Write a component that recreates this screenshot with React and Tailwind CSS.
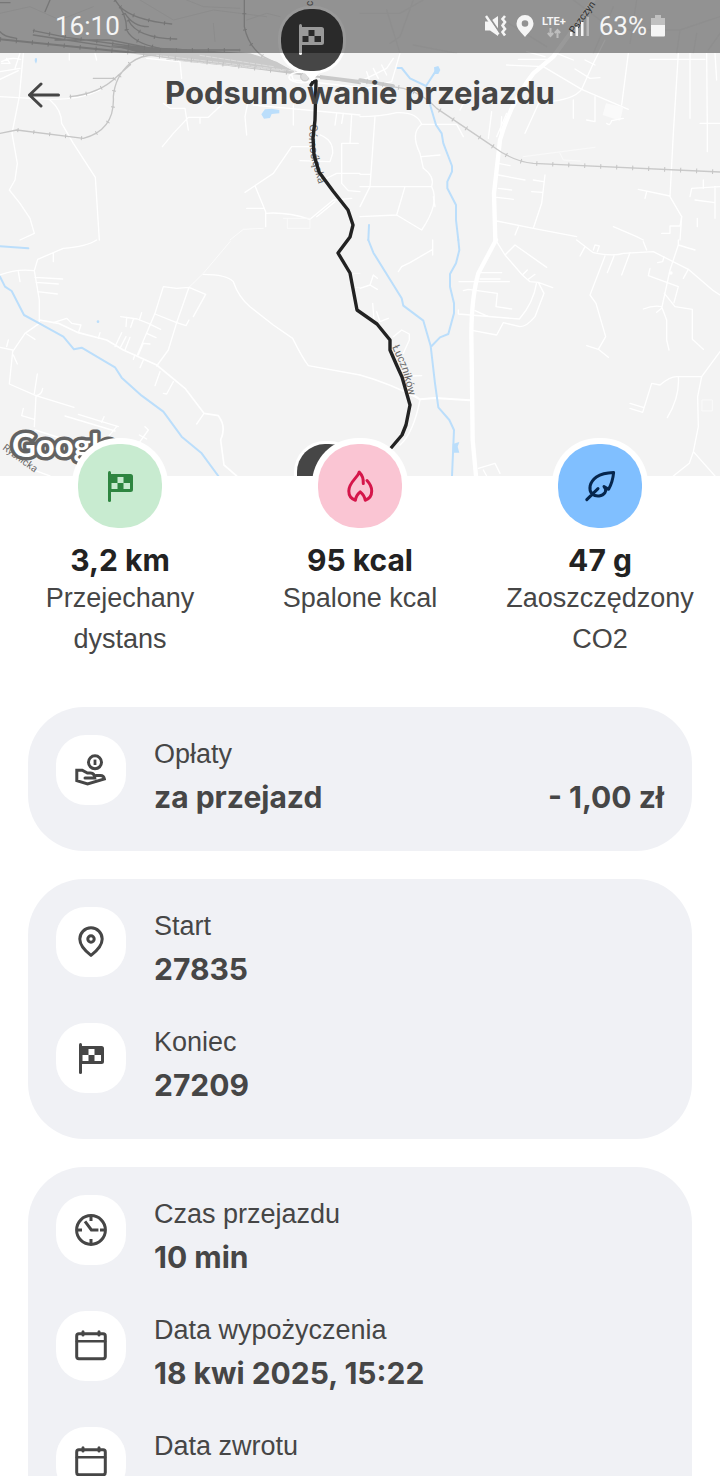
import React from "react";

function FlagIcon({ className }) {
  return (
    <svg viewBox="0 0 36 36" className={className} fill="currentColor" aria-hidden="true">
      <path d="M7.5 4.5V32.5" stroke="currentColor" strokeWidth="3" strokeLinecap="round" />
      <path
        fillRule="evenodd"
        d="M7 6H28.5a2.5 2.5 0 0 1 2.5 2.5V21.5a2.5 2.5 0 0 1-2.5 2.5H7ZM15.5 9v6h6V9ZM9.5 15v6h6v-6ZM21.5 15v6H28v-6Z"
      />
    </svg>
  );
}

function LineIcon({ className, children }) {
  return (
    <svg
      viewBox="0 0 36 36"
      className={className}
      fill="none"
      stroke="currentColor"
      strokeWidth="3"
      strokeLinecap="round"
      strokeLinejoin="round"
      aria-hidden="true"
    >
      {children}
    </svg>
  );
}

function FlameIcon({ className }) {
  return (
    <LineIcon className={className}>
      <path d="M21.3 15.6C21.6 10.5 19.6 6.4 17.2 4C16 9.6 6.8 14 6.8 23C6.8 27.5 9 30.8 13.4 32.2C13.8 28.6 15.6 26 18.2 23.8C20.8 26 22.8 28.6 23.2 32.2C27.5 30.8 29.7 27.5 29.7 23C29.7 18.6 27.6 15.4 25 12.6" />
    </LineIcon>
  );
}

function LeafIcon({ className }) {
  return (
    <LineIcon className={className}>
      <path d="M4.8 31.6L16 20.6M10 26C6.4 21.6 7.2 14.4 14.4 9C19 6 25 4.8 31.6 4.6C31 11 29.6 16 26.6 21.2L22 18.6C24 20.4 24.4 22.2 23 24.6C20.4 28.4 14.4 29.2 10 26Z" />
    </LineIcon>
  );
}

function HandCoinIcon({ className }) {
  return (
    <LineIcon className={className}>
      <circle cx="22" cy="10.3" r="6.5" />
      <path d="M22 7.6V13" strokeWidth="2.8" strokeLinecap="butt" />
      <path
        strokeLinejoin="miter"
        d="M12 26H21.8C21.6 22.6 20.4 21.2 17.6 21H14.4L9.2 18.2H3.8V28.6L14.6 32L31.4 27C31 24.4 29.8 23.4 27.4 23.4H23"
      />
    </LineIcon>
  );
}

function PinIcon({ className }) {
  return (
    <LineIcon className={className}>
      <path d="M18 31.4C13.6 28 6.8 21.6 6.8 15a11.2 11.2 0 0 1 22.4 0C29.2 21.6 22.4 28 18 31.4Z" />
      <circle cx="18" cy="15" r="3.2" />
    </LineIcon>
  );
}

function ClockIcon({ className }) {
  return (
    <LineIcon className={className}>
      <circle cx="18" cy="18" r="14.4" />
      <path
        strokeLinecap="butt"
        strokeLinejoin="miter"
        d="M18 4V9M18 27V32M4 18H9M27 18H32M12 9.4L18.4 18H25.4"
      />
    </LineIcon>
  );
}

function CalendarIcon({ className }) {
  return (
    <LineIcon className={className}>
      <rect x="3.7" y="5.8" width="28.6" height="25" rx="2.2" />
      <path d="M4 13.2H32" strokeWidth="2.6" />
      <path d="M10 3.8V7M26 3.8V7" />
    </LineIcon>
  );
}

function MapView() {
  return (
    <svg
      viewBox="0 0 720 476"
      preserveAspectRatio="xMidYMin slice"
      className="absolute inset-0 h-full w-full bg-[#f3f3f3]"
      fill="none"
      strokeLinecap="round"
      strokeLinejoin="round"
      aria-hidden="true"
    >
      {/* north-west tile */}
      <g transform="scale(.33333)">
        <g stroke="#fff" strokeWidth="4">
          <path d="M70 160L58 290L36 400L52 490L45 540L28 570L60 610L90 655L103 700L60 720" />
          <path d="M0 290L150 298Q240 300 300 270M150 300Q185 330 185 370L220 430L286 532L298 720" />
          <path d="M5 185Q30 170 62 178M20 175L30 190L5 190M0 215L60 205M0 238L55 212M60 160L45 205" />
          <path d="M208 160V180M285 160L290 180M440 175L540 185L545 235" />
          <path d="M490 310L510 325H555L565 390M487 440L520 400L565 352H625L670 310M600 352V370" />
          <path d="M740 405L735 350L745 300M870 210L880 240L1080 262M760 315L1080 345M880 315V375" />
          <path d="M945 440H875L820 520L735 577M765 557L797 635V680M740 625H790M797 640Q860 635 930 658L1000 600L1055 595M950 650L1005 605" />
          <path d="M960 405Q1000 420 998 460L990 485L900 482M1025 430H1075M1025 430V550L1045 572L1080 575M970 540L1010 520H1080M1055 345L1050 430M1010 340L1005 375M1030 340L1025 370" />
          <path d="M690 720L730 688L790 685" strokeWidth="2" />
        </g>
        <path d="M850 655H930V685H862V655" stroke="#fafafa" strokeWidth="3" />
        <g stroke="#e9e9e9" strokeWidth="3">
          <path d="M0 40L90 20L180 60L280 20M420 0L520 60L640 30L800 50M640 70L645 125M740 60L800 40L840 50M560 0L610 20L720 25" />
        </g>
        <g stroke="#c6c6c6" strokeWidth="4">
          <path d="M0 118L400 158L900 222L1080 250" strokeWidth="6" />
          <path d="M100 92L200 112L480 150L720 150M100 105L330 140L520 155M165 120H330L470 148" strokeWidth="4" />
          <path d="M345 0Q380 40 380 90Q400 130 480 145L560 150M360 20Q400 60 515 72M375 40Q400 80 445 80M385 60Q410 115 530 117" />
          <path d="M733 0V80Q745 140 790 170L880 215" />
          <path d="M0 8H30M150 0L135 35M0 95Q10 110 50 115" />
          <path d="M470 165Q420 165 390 190Q345 230 340 290Q345 390 250 415L50 390L0 400M50 390L250 415M210 290Q300 280 350 230L390 195M280 235L340 235" />
        </g>
        <path d="M330 135L560 148L750 160L830 185L890 220L760 205L560 185L430 162Z" fill="#c9c9c9" />
        <path d="M470 166L890 214M500 178L850 212M600 166L820 200" stroke="#dcdcdc" strokeWidth="3" strokeDasharray="14 5" />
        <path d="M960 225L1080 240V248L960 238Z" fill="#c9c9c9" />
        <g stroke="#c2c2c2" strokeLinecap="butt" strokeDasharray="3 45">
          <path d="M0 118L400 158L900 222" strokeWidth="14" />
          <path d="M100 92L200 112L480 150L720 150M210 290Q300 280 350 230" strokeWidth="12" />
          <path d="M345 0Q380 40 380 90Q400 130 480 145M360 20Q400 60 515 72M385 60Q410 115 530 117" strokeWidth="12" />
          <path d="M733 40V80Q745 140 790 170M390 190Q345 230 340 290Q345 390 250 415L50 390" strokeWidth="12" />
        </g>
        <path d="M784 343L795 328L815 326L838 330V340L815 342L810 354L792 356Z" fill="#bbdefb" />
        <path d="M105 175h6v8l-3 8l-4-8Z" fill="#bbdefb" />
        <ellipse cx="905" cy="232" rx="38" ry="16" stroke="#fff" strokeWidth="5" />
        <circle cx="915" cy="230" r="13" fill="#ddd" stroke="#c4c4c4" strokeWidth="3" />
      </g>

      {/* north-east tile */}
      <g transform="translate(360 0) scale(.33333)">
        <g stroke="#ededed" strokeWidth="4">
          <path d="M0 40H120L190 0M80 30L120 160M160 0L120 110L90 130M160 135L290 160" />
          <path d="M430 60L560 140M640 0L760 90L960 90L1080 50M760 20L700 160M830 0L810 130M960 90L950 160M1010 100L1000 160M1080 100L1045 150" />
        </g>
        <g stroke="#fff" strokeWidth="4">
          <path d="M120 160L95 245L0 270M100 175L80 205L0 245M65 195L80 225M40 205L55 235M20 215L30 245" />
          <path d="M0 350Q60 350 110 338Q170 335 185 373H290L310 410M185 373Q150 400 180 460L190 505Q225 530 215 560Q240 610 185 690L110 645L0 650M0 560H215M135 560L110 645M185 470L240 465M45 350L30 560L0 620M0 523H30" />
          <path d="M440 195L550 200L665 268L805 328M475 178H570M500 155L555 170M590 160L640 180M665 268L700 190L735 120M645 207L690 235L720 233M675 180L705 195M560 305Q640 300 665 268M545 290L495 400M640 300V355M705 290V365L680 360" />
          <path d="M805 160L785 315M955 160L940 400L930 590L965 650L960 720M870 178H1035M990 160V355M1040 160L1042 390V455M1065 160L1070 240M1020 370H1080" />
          <path d="M415 490L450 497M415 525L495 540M415 565L455 570M410 592L460 598M555 525L545 610L520 685M520 540L550 545M515 575L548 577M410 663L520 685L650 710M475 680L465 705M835 568L930 588M860 575L855 595M760 680L830 710L850 720M965 650L960 678H930V700H905M990 590L995 565L1080 560M1005 600L1065 608M1065 560V655M1030 540V565M1012 655V680" />
          <path d="M385 415L395 335M420 430L425 350M410 410L440 340M300 330L310 310M220 590L225 620" />
        </g>
        <path d="M738 310L790 322L780 362L728 345Z" fill="#fafafa" />
        <path d="M490 470L705 442M600 460L610 480L660 483" stroke="#fafafa" strokeWidth="3" />
        <path d="M740 370Q750 380 755 362L790 355" stroke="#fff" strokeWidth="4" />
        <path d="M700 0Q640 90 580 170L520 220Q450 310 420 420L402 580L406 720" stroke="#fff" strokeWidth="13" />
        <g stroke="#bbdefb" strokeWidth="6">
          <path d="M113 204H125L150 235L198 258L212 320L228 375L245 400L250 430L276 498V515L262 545V565L288 615V660L295 720M198 258L228 212" />
          <path d="M27 675L25 720" />
        </g>
        <path d="M222 202L235 198L241 210L235 222H224Z" fill="#bbdefb" />
        <path d="M0 245L130 265Q190 280 230 325L400 440Q460 485 520 490L1080 516" stroke="#c9c9c9" strokeWidth="4" />
        <path d="M0 240L100 258" stroke="#c9c9c9" strokeWidth="10" />
        <path d="M20 245L130 265Q190 280 230 325L400 440Q460 485 520 490L1080 516" stroke="#c4c4c4" strokeWidth="14" strokeLinecap="butt" strokeDasharray="3 45" />
      </g>

      {/* south-west tile */}
      <g transform="translate(0 240) scale(.33333)">
        <g stroke="#fff" strokeWidth="4">
          <path d="M290 0Q260 20 190 25L113 58L103 92L118 180V245M160 40V65M0 105Q50 85 103 92M55 95L60 125M105 112L188 117M108 127L175 132M113 155L172 162" />
          <path d="M118 240L175 250L235 278L320 300L370 330L470 375L555 445L612 520L655 527Q680 560 662 600L672 675L710 708" strokeWidth="5" />
          <path d="M118 250L75 280L38 335L28 432L108 467L222 502M108 467L103 560M0 322L38 330M20 320L25 300M80 282L105 298M40 345L52 372M103 460L112 402M108 467Q125 465 128 445M103 538L65 527L70 505" />
          <path d="M160 248L200 235L215 250L243 255L235 278M300 278L295 295M365 278L345 320M378 290L360 325M390 292L375 330" />
          <path d="M412 345L465 220L490 140L530 145L567 142L617 163L580 230M567 142L530 248L505 330L470 378M465 222L530 248L558 257L567 240M362 230L412 237L445 250L482 268M425 218L418 240M400 238L392 262M380 232L378 260M440 280L468 293M415 345L430 310L450 312M400 358L405 345M420 383L430 360M480 395L465 437M520 425L500 462L490 460M612 520L590 552" />
          <path d="M610 103Q680 103 700 125Q715 170 750 200L820 255L878 295Q905 350 925 377L1080 405" />
          <path d="M567 142L610 100L690 5" strokeWidth="2" />
          <path d="M195 528L345 573M235 523L355 560M305 547L312 530M350 560L300 620M435 560L445 570L420 605M418 585L440 597M105 570L200 600L300 640M100 690L150 708" />
          <path d="M1060 100H1080M1060 142H1080" strokeWidth="2" />
        </g>
        <g stroke="#bbdefb" strokeWidth="6">
          <path d="M0 19L85 25M0 110L15 140L35 153L72 225L118 250L190 290L222 328L245 323L345 382L365 413L425 467L490 515L545 590L605 640L655 708" />
        </g>
        <circle cx="294" cy="245" r="4" fill="#bbdefb" />
      </g>

      {/* south-east tile */}
      <g transform="translate(360 240) scale(.33333)">
        <g stroke="#fff" strokeWidth="4">
          <path d="M218 0V45M218 28L150 68L125 80L115 95M0 405Q90 430 180 478M180 480Q160 580 120 615M100 290L125 270L148 282V300L130 340M155 408L185 407M38 190L42 240M85 235L60 245L50 215M0 145L30 135L52 148M30 135L40 105L52 115" />
          <path d="M410 5L435 45L487 105L510 125L535 127L578 143M435 45L465 15L560 82M487 105L502 90M505 118L525 103M530 127Q520 190 478 237L295 222M535 127L552 160L525 230Q500 260 480 260L430 248L410 285L340 272M297 125H448M360 98H425M360 117H420M310 152L325 148L412 160L408 200L455 207M345 212L385 230M295 222V210" />
          <path d="M650 0L700 38Q760 50 790 40L880 35L985 88L1060 152L1080 165M660 48L675 20M700 30L705 15L718 18L712 35M762 48L742 98M810 38L785 105M860 30L850 5M893 68L908 65L912 50M735 48L690 165L708 190L737 290L715 328L680 317M715 328L745 352" />
          <path d="M955 0V15L1005 30M955 15L930 90L905 205M870 85L865 107L955 140L942 188M985 88L970 115M913 160L945 200L997 208V298L1030 328M850 207Q880 195 905 200L920 240V300L927 330M905 205L890 217" />
          <path d="M1080 335L1025 410L950 410Q930 410 900 435L875 430L848 517L810 505M810 490L852 503M955 410Q960 470 922 533M1025 410L1013 470L1015 560L1000 635L988 670L940 708M1000 635L1065 708M355 685L405 670L420 700M370 690L380 708" />
        </g>
        <path d="M1027 480H1057V513H1027Z" stroke="#fafafa" strokeWidth="3" />
        <circle cx="933" cy="99" r="5" fill="#fff" />
        <path d="M160 465L180 478L225 474L330 481" stroke="#fff" strokeWidth="6" />
        <path d="M408 0L355 100Q335 170 334 280L338 600L348 708" stroke="#fff" strokeWidth="13" />
        <g stroke="#bbdefb" strokeWidth="6">
          <path d="M25 0L40 38L125 175L130 197L190 242L212 318L225 430L235 502L268 540L282 570L276 708M295 0L298 30L288 70L270 102V140L282 190V220L265 282L240 292L215 318" />
        </g>
        <path d="M278 612L298 606L293 620L298 638H278Z" fill="#bbdefb" />
      </g>

      {/* street names */}
      <defs>
        <path id="street-n" d="M310 124L309 142L311 158L318 182L330 205" />
        <path id="street-s" d="M392 347L402 369L409 396L414 420" />
      </defs>
      <g fill="#6a6a6a" stroke="none" fontFamily="Roboto, sans-serif" fontSize="11">
        <text><textPath href="#street-n">Górnośląska</textPath></text>
        <text><textPath href="#street-s">Łuczników</textPath></text>
        <text transform="translate(2 449) rotate(36)" fontSize="10">Rybnicka</text>
        <text transform="translate(574 34) rotate(-54)" fontSize="10" fill="#505050">Pszczyn</text>
        <text transform="translate(313 6) rotate(-90)" fontSize="10">c</text>
      </g>

      <path
        d="M311 85L313 82L316 81L315 120L313 138L314 155L319 172L333 191L348 210L353 225L350 237L338 253L350 273L357 310L377 324L390 340V350L397 366L402 377L410 405L406 425L402 435L391 448"
        stroke="#222"
        strokeWidth="3.4"
      />

      {/* end marker */}
      <path d="M303 70L312 81L321 70Z" fill="#fff" stroke="#fff" />
      <rect x="278" y="6" width="68" height="68" rx="32" fill="#fff" />
      <rect x="281" y="9" width="62" height="62" rx="29" fill="#464646" />
      <svg x="293" y="21" width="36" height="36" viewBox="0 0 36 36" className="text-white">
        <FlagIcon />
      </svg>

      {/* start marker */}
      <rect x="294" y="441" width="66" height="66" rx="31" fill="#fff" />
      <rect x="297" y="444" width="60" height="60" rx="28" fill="#464646" />

      <text
        x="12"
        y="457"
        fontFamily="Lato, sans-serif"
        fontWeight="700"
        fontSize="33"
        fill="#fff"
        stroke="#636363"
        strokeWidth="7"
        paintOrder="stroke"
      >
        Google
      </text>
    </svg>
  );
}

function StatusBar() {
  return (
    <div className="relative flex h-[53px] items-center justify-between bg-black/40 pr-[55px] pb-px pl-[55px] font-[Roboto,sans-serif] text-[26px] leading-8 text-[#f5f5f5]">
      <span>16:10</span>
      <div className="flex items-center">
        <svg viewBox="0 0 24 24" className="mr-2 h-6 w-6" fill="currentColor" aria-hidden="true">
          <path d="M1 7.500H6L14 2V22L6 16.500H1Z" />
          <path d="M3 0L16 19" stroke="#919191" strokeWidth="2" />
          <path d="M2 2L14.500 20.500" stroke="currentColor" strokeWidth="2.400" />
          <path d="M21 2L18.500 5L21 8L18.500 11.500L21 15L18.500 18L21 21.500" fill="none" stroke="currentColor" strokeWidth="2.600" />
        </svg>
        <svg viewBox="0 0 18 22" className="mr-2 h-[22px] w-[18px]" fill="currentColor" aria-hidden="true">
          <path fillRule="evenodd" d="M9 0a8.500 8.500 0 0 0-8.500 8.500C.5 14 6 18 9 22c3-4 8.500-8 8.500-13.500A8.500 8.500 0 0 0 9 0Zm0 5.200a3.300 3.300 0 1 1 0 6.600 3.300 3.300 0 0 1 0-6.600Z" />
        </svg>
        <span className="mr-1 flex flex-col items-center">
          <span className="text-[11px] leading-[13px] font-bold">LTE+</span>
          <svg viewBox="0 0 14 10" className="h-[10px] w-[14px] text-[#bdbdbd]" fill="none" stroke="currentColor" strokeWidth="2" aria-hidden="true">
            <path d="M3.500 0V8M.8 5L3.500 8L6.200 5M10.500 10V2M7.800 5L10.500 2L13.200 5" />
          </svg>
        </span>
        <svg viewBox="0 0 19 20" className="mr-[10px] h-5 w-[19px]" fill="currentColor" aria-hidden="true">
          <path d="M0 16h2.500v4H0ZM5.500 11H8v9H5.500ZM11 6h2.500v14H11Z" />
          <path d="M16.500 1H19v19h-2.500Z" fill="#b8b8b8" />
        </svg>
        <span className="mr-1">63%</span>
        <svg viewBox="0 0 14 22" className="h-[22px] w-[14px]" fill="currentColor" aria-hidden="true">
          <path d="M4 0h6v3h4v7H0V3h4Z" fill="#c0c0c0" />
          <path d="M0 10H14V20.500a1 1 0 0 1-1 1H1a1 1 0 0 1-1-1Z" />
        </svg>
      </div>
    </div>
  );
}

function Stat({ icon: Icon, tone, value, label }) {
  return (
    <li className="flex flex-col items-center text-center">
      <div className="rounded-[46px] bg-white p-[6px]">
        <div className={`flex h-[84px] w-[84px] items-center justify-center rounded-[40px] ${tone}`}>
          <Icon className="h-9 w-9" />
        </div>
      </div>
      <strong className="mt-2 font-[Inter,sans-serif] text-[30px] leading-[36px] text-[#222]">{value}</strong>
      <span className="px-4 text-[27px] leading-[41px]">{label}</span>
    </li>
  );
}

function Card({ children }) {
  return <dl className="flex flex-col gap-7 rounded-[56px] bg-[#f0f1f5] p-7">{children}</dl>;
}

function Row({ icon: Icon, label, value, amount }) {
  return (
    <div className="flex min-h-[88px] gap-7">
      <div className="flex h-[70px] w-[70px] shrink-0 items-center justify-center rounded-[30px] bg-white">
        <Icon className="h-9 w-9" />
      </div>
      <div className="flex-1">
        <dt className="text-[27px] leading-[38px]">{label}</dt>
        {value && (
          <dd className="flex justify-between font-[Inter,sans-serif] text-[30px] leading-[48px] font-bold">
            <span>{value}</span>
            {amount && <span>{amount}</span>}
          </dd>
        )}
      </div>
    </div>
  );
}

export default function App() {
  return (
    <div className="h-screen overflow-hidden bg-white font-['Liberation_Sans',Arial,sans-serif] text-[#464646]">
      <header className="relative h-[476px]">
        <MapView />
        <StatusBar />
        <div className="relative grid grid-cols-[88px_1fr_88px] items-center pt-4">
          <button type="button" aria-label="Wstecz" className="flex h-12 items-center pt-1 pl-7">
            <svg viewBox="0 0 32 26" className="h-[26px] w-8" fill="none" stroke="currentColor" strokeWidth="3" strokeLinecap="round" strokeLinejoin="round" aria-hidden="true">
              <path d="M30.500 13H1.500M13 2L1.500 13L13 24" />
            </svg>
          </button>
          <h1 className="text-center font-[Inter,sans-serif] text-[31px] leading-[48px] font-bold whitespace-nowrap">Podsumowanie przejazdu</h1>
        </div>
      </header>
      <main>
        <ul className="relative -mt-[38px] grid grid-cols-3">
          <Stat icon={FlagIcon} tone="bg-[#c8ebd0] text-[#2e8540]" value="3,2 km" label="Przejechany dystans" />
          <Stat icon={FlameIcon} tone="bg-[#fac5d3] text-[#d5164a]" value="95 kcal" label="Spalone kcal" />
          <Stat icon={LeafIcon} tone="bg-[#80bfff] text-[#06264d]" value="47 g" label="Zaoszczędzony CO2" />
        </ul>
        <div className="mt-[47px] flex flex-col gap-7 px-7">
          <Card>
            <Row icon={HandCoinIcon} label="Opłaty" value="za przejazd" amount="- 1,00 zł" />
          </Card>
          <Card>
            <Row icon={PinIcon} label="Start" value="27835" />
            <Row icon={FlagIcon} label="Koniec" value="27209" />
          </Card>
          <Card>
            <Row icon={ClockIcon} label="Czas przejazdu" value="10 min" />
            <Row icon={CalendarIcon} label="Data wypożyczenia" value="18 kwi 2025, 15:22" />
            <Row icon={CalendarIcon} label="Data zwrotu" />
          </Card>
        </div>
      </main>
    </div>
  );
}
